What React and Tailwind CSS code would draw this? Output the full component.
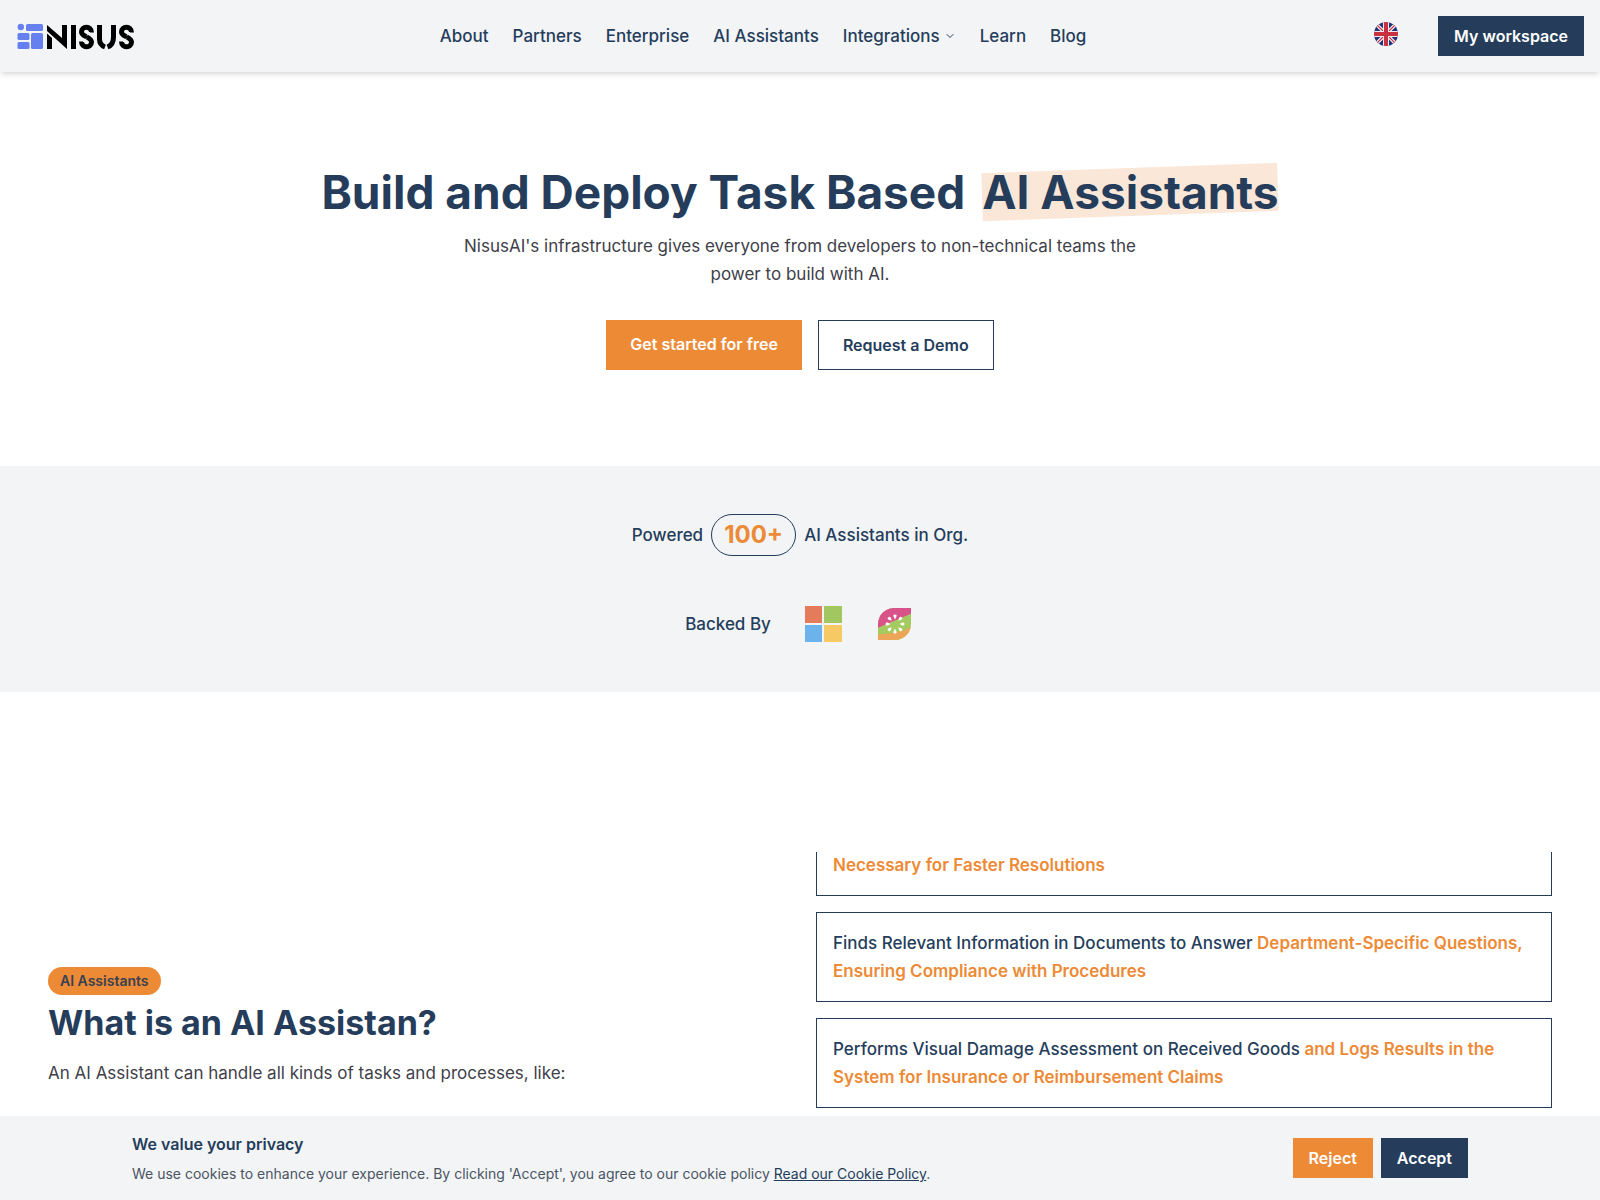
import React from 'react'
import { ChevronDown } from 'lucide-react'

const navItems = [
  { label: 'About' },
  { label: 'Partners' },
  { label: 'Enterprise' },
  { label: 'AI Assistants' },
  { label: 'Integrations', hasMenu: true },
  { label: 'Learn' },
  { label: 'Blog' },
]

const tasks = [
  {
    text: 'Finds Relevant Information in Documents to Answer',
    highlight: 'Department-Specific Questions, Ensuring Compliance with Procedures',
  },
  {
    text: 'Performs Visual Damage Assessment on Received Goods',
    highlight: 'and Logs Results in the System for Insurance or Reimbursement Claims',
  },
]

const Logo = () => (
  <svg width='136' height='32' viewBox='0 0 136 32' role='img' aria-label='Nisus'>
    <g fill='#6680f0'>
      <circle cx='4.8' cy='7' r='3.2' />
      <rect x='10' y='4' width='17' height='7' rx='1.5' />
      <rect x='1.5' y='13' width='12' height='7' rx='1.5' />
      <rect x='1.5' y='22' width='12' height='7' rx='1.5' />
      <rect x='15' y='13' width='12' height='16' rx='1.5' />
    </g>
    <g fill='#000'>
      <path d='M31 5L46 18V5H51V29L31 11Z' />
      <path d='M31 13.5L36 18V29H31Z' />
      <rect x='55' y='5' width='5' height='24' />
    </g>
    <g fill='none' stroke='#000' strokeWidth='5'>
      <path d='M75.5 12.5C75.5 5.5 65.5 5.5 65.5 12C65.5 17 75.5 16.5 75.5 22C75.5 28.5 65.5 28.5 65.5 21.5' />
      <path d='M83.5 5V19C83.5 23 85 25.5 89 27' />
      <path d='M97.5 5V17C97.5 22 96 25.5 91.5 27' />
      <path d='M115.5 12.5C115.5 5.5 105.5 5.5 105.5 12C105.5 17 115.5 16.5 115.5 22C115.5 28.5 105.5 28.5 105.5 21.5' />
    </g>
    <path d='M74 12L71 15.500M70 18.500L67 22M114 12L111 15.500M110 18.500L107 22' stroke='#f2f4f6' strokeWidth='1' />
  </svg>
)

const UkFlag = () => (
  <svg width='24' height='24' viewBox='0 0 24 24' aria-hidden='true'>
    <clipPath id='flag'>
      <circle cx='12' cy='12' r='12' />
    </clipPath>
    <g clipPath='url(#flag)'>
      <rect width='24' height='24' fill='#1f3478' />
      <path d='M0 0L24 24M24 0L0 24' stroke='#f3e9f0' strokeWidth='3.6' />
      <path d='M0 0L24 24M24 0L0 24' stroke='#c8313e' strokeWidth='1.2' />
      <path d='M12 0V24M0 12H24' stroke='#f3e9f0' strokeWidth='6' />
      <path d='M12 0V24M0 12H24' stroke='#c8313e' strokeWidth='4' />
    </g>
  </svg>
)

const MicrosoftLogo = () => (
  <svg width='40' height='40' viewBox='0 0 40 40' role='img' aria-label='Microsoft'>
    <rect x='2' y='2' width='17' height='17' fill='#e47c5c' />
    <rect x='21' y='2' width='18' height='17' fill='#a3c760' />
    <rect x='2' y='21' width='17' height='17' fill='#6bb3ea' />
    <rect x='21' y='21' width='18' height='17' fill='#f6c964' />
  </svg>
)

const seedAngles = [0, 45, 90, 135, 180, 225, 270, 315]

const KiwiLogo = () => (
  <svg width='40' height='40' viewBox='0 0 40 40' role='img' aria-label='Kiwi'>
    <clipPath id='leaf'>
      <path d='M20 4H36V20A16 16 0 0 1 20 36H3V20A16 16 0 0 1 20 4Z' />
    </clipPath>
    <g clipPath='url(#leaf)'>
      <rect width='40' height='40' fill='#a3cb5f' />
      <path d='M0 0H40V8L26 14L0 25Z' fill='#d9538a' />
      <path d='M0 31C12 29 26 30 40 21V40H0Z' fill='#eba658' />
    </g>
    {seedAngles.map((angle) => (
      <path
        key={angle}
        d='M20 15.5L18.6 12.6A1.5 1.5 0 1 1 21.4 12.6Z'
        fill='#fff'
        transform={`rotate(${angle} 20 20)`}
      />
    ))}
  </svg>
)

const Header = () => (
  <header className='sticky top-0 z-10 flex h-18 items-center justify-between bg-[#f2f4f6] px-4 shadow-md'>
    <a href='#home'>
      <Logo />
    </a>
    <nav className='flex items-center gap-6 text-[17px] leading-7 font-medium'>
      {navItems.map((item) => (
        <a key={item.label} href='#nav' className='flex items-center gap-1'>
          {item.label}
          {item.hasMenu && <ChevronDown size={12} />}
        </a>
      ))}
    </nav>
    <div className='flex items-center gap-10'>
      <button className='mb-1' aria-label='Change language'>
        <UkFlag />
      </button>
      <button className='h-10 bg-[#253d5b] px-4 font-semibold text-white'>My workspace</button>
    </div>
  </header>
)

const Hero = () => (
  <section className='flex flex-col items-center px-12 py-24 text-center'>
    <h1 className='text-[46px] leading-12 font-bold'>
      Build and Deploy Task Based{' '}
      <span className='relative ml-1.5 inline-block'>
        <span className='absolute inset-0 -rotate-2 bg-[#fae7d8]'></span>
        <span className='relative'>AI Assistants</span>
      </span>
    </h1>
    <p className='mt-4 max-w-2xl text-[17px] leading-7 text-[#40404a]'>
      NisusAI's infrastructure gives everyone from developers to non-technical teams the power to build with AI.
    </p>
    <div className='mt-8 flex gap-4 font-semibold'>
      <button className='bg-[#ed8a36] px-6 pt-3 pb-3.5 text-white'>Get started for free</button>
      <button className='border border-[#253d5b] px-6 py-3'>Request a Demo</button>
    </div>
  </section>
)

const Backers = () => (
  <section className='flex flex-col items-center gap-12 bg-[#f2f4f6] py-12 text-[17px] leading-7 font-medium'>
    <div className='flex items-center gap-2'>
      <span>Powered</span>
      <span className='rounded-full border border-[#253d5b] px-3 py-1 text-2xl font-bold text-[#ed8a36]'>100+</span>
      <span>AI Assistants in Org.</span>
    </div>
    <div className='flex items-center gap-8'>
      <span>Backed By</span>
      <MicrosoftLogo />
      <KiwiLogo />
    </div>
  </section>
)

const AssistantInfo = () => (
  <section className='grid grid-cols-2 items-center gap-8 px-12 py-40'>
    <div>
      <span className='inline-block rounded-full bg-[#ed8a36] px-3 py-1 text-sm font-semibold text-[#374151]'>
        AI Assistants
      </span>
      <h2 className='mt-2 text-[34px] leading-10 font-bold'>What is an AI Assistan?</h2>
      <p className='mt-4 text-[17px] leading-7 text-[#40404a]'>
        An AI Assistant can handle all kinds of tasks and processes, like:
      </p>
    </div>
    <ul className='flex h-[350px] flex-col gap-4 overflow-hidden text-[17px] leading-7 font-medium'>
      <li className='flex h-11 shrink-0 items-end border border-t-0 border-[#253d5b] px-4 pb-4'>
        <span className='font-semibold text-[#ed8a36]'>Necessary for Faster Resolutions</span>
      </li>
      {tasks.map((task) => (
        <li key={task.text} className='border border-[#253d5b] p-4'>
          {task.text} <span className='font-semibold text-[#ed8a36]'>{task.highlight}</span>
        </li>
      ))}
    </ul>
  </section>
)

const CookieBanner = () => (
  <div className='fixed inset-x-0 bottom-0 z-10 bg-[#f2f4f6] py-4'>
    <div className='mx-auto flex max-w-[1400px] items-center justify-between px-8'>
      <div>
        <h3 className='font-semibold'>We value your privacy</h3>
        <p className='mt-2 text-sm text-[#4b5563]'>
          We use cookies to enhance your experience. By clicking 'Accept', you agree to our cookie policy{' '}
          <a href='#cookies' className='text-[#253d5b] underline'>Read our Cookie Policy</a>.
        </p>
      </div>
      <div className='flex gap-2 font-semibold text-white'>
        <button className='h-10 bg-[#ed8a36] px-4'>Reject</button>
        <button className='h-10 bg-[#253d5b] px-4'>Accept</button>
      </div>
    </div>
  </div>
)

const App = () => {
  return (
    <div className="bg-white font-['Inter',sans-serif] text-[#253d5b]">
      <Header />
      <main>
        <Hero />
        <Backers />
        <AssistantInfo />
      </main>
      <CookieBanner />
    </div>
  )
}

export default App
